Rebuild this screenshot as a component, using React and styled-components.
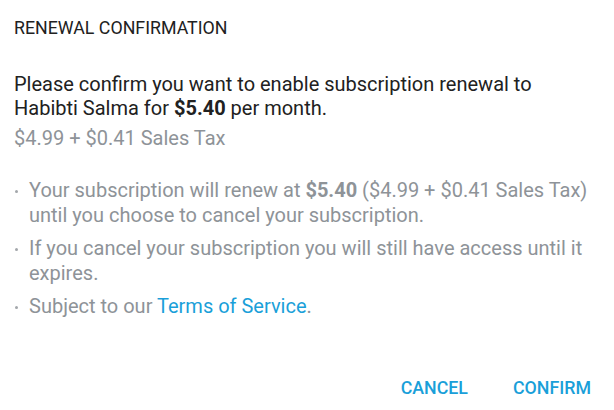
import React from "react";
import styled, { createGlobalStyle } from "styled-components";

const Global = createGlobalStyle`
  html, body { margin: 0; padding: 0; background: #ffffff; }
  body { font-family: Roboto, "Noto Sans", Arial, sans-serif; }
`;

const Dialog = styled.div`
  width: 614px;
  height: 410px;
  box-sizing: border-box;
  background: #ffffff;
  display: flex;
  flex-direction: column;
`;

const Content = styled.div`
  padding: 16px 20px 0 14px;
  flex: 1;
`;

const Title = styled.h2`
  margin: 0;
  font-size: 17.8px;
  line-height: 24px;
  font-weight: 400;
  color: #212121;
`;

const Message = styled.div`
  margin-top: 32px;
  font-size: 20px;
  line-height: 24px;
  color: #212121;
  strong { font-weight: 700; }
`;

const Subtle = styled.div`
  margin-top: 6px;
  font-size: 20px;
  line-height: 24px;
  color: #8e9398;
`;

const List = styled.ul`
  list-style: none;
  margin: 28px 0 0;
  padding: 0;
  display: flex;
  flex-direction: column;
  gap: 8px;
`;

const Item = styled.li`
  position: relative;
  padding-left: 15px;
  font-size: 20px;
  line-height: 25px;
  color: #8e9398;
  strong { font-weight: 700; }
  &::before {
    content: "";
    position: absolute;
    left: 15px;
    left: 1px;
    top: 12px;
    width: 3px;
    height: 3px;
    border-radius: 50%;
    background: #a3a7ab;
  }
`;

const Link = styled.a`
  color: #1a9fd9;
  text-decoration: none;
`;

const Actions = styled.div`
  display: flex;
  justify-content: flex-end;
  gap: 29px;
  padding: 0 15px 5px 0;
`;

const Button = styled.button`
  border: none;
  background: transparent;
  padding: 0 8px;
  height: 36px;
  font-family: Roboto, Arial, sans-serif;
  font-size: 17.8px;
  font-weight: 500;
  color: #1a9fd9;
  text-transform: uppercase;
  cursor: pointer;
`;

export default function App() {
  return (
    <>
      <Global />
      <Dialog>
        <Content>
          <Title>RENEWAL CONFIRMATION</Title>
          <Message>
            Please confirm you want to enable subscription renewal to Habibti Salma for <strong>$5.40</strong> per month.
          </Message>
          <Subtle>$4.99 + $0.41 Sales Tax</Subtle>
          <List>
            <Item>
              Your subscription will renew at <strong>$5.40</strong> ($4.99 + $0.41 Sales Tax) until you choose to cancel your subscription.
            </Item>
            <Item>
              If you cancel your subscription you will still have access until it expires.
            </Item>
            <Item>
              Subject to our <Link href="#">Terms of Service</Link>.
            </Item>
          </List>
        </Content>
        <Actions>
          <Button>Cancel</Button>
          <Button>Confirm</Button>
        </Actions>
      </Dialog>
    </>
  );
}
